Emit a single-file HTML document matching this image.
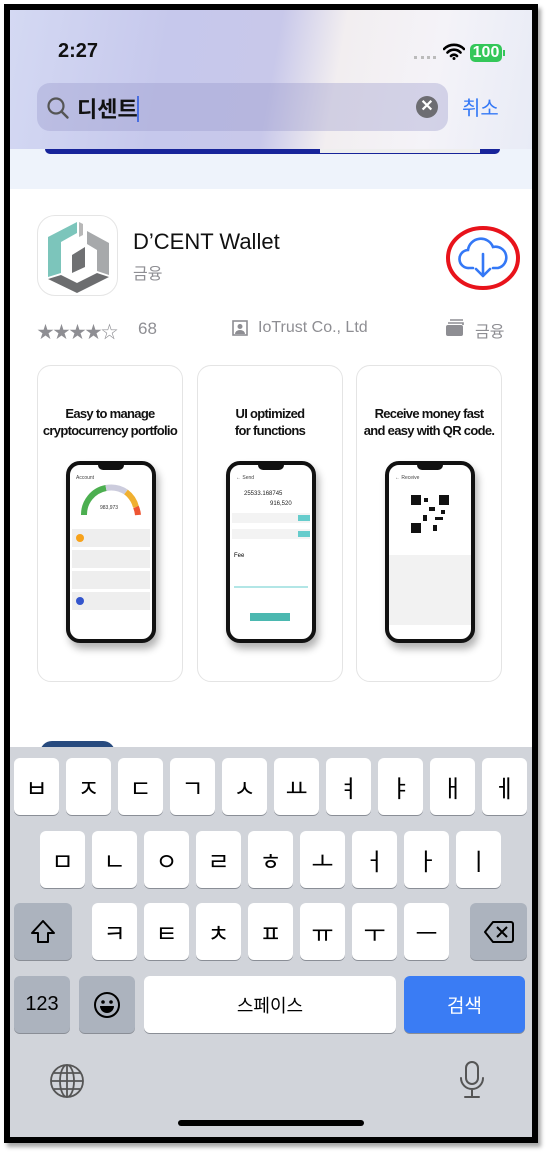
<!DOCTYPE html>
<html><head><meta charset="utf-8"><style>
*{margin:0;padding:0;box-sizing:border-box}
body{width:548px;height:1154px;background:#fff;position:relative;overflow:hidden;font-family:"Liberation Sans","Noto Sans CJK KR",sans-serif}
.frame{position:absolute;left:4px;top:4px;width:534px;height:1139px;background:#000;box-shadow:3px 4px 4px rgba(0,0,0,.35)}
.scr{position:absolute;left:10px;top:10px;width:522px;height:1127px;background:#fff;overflow:hidden}
.hdr{position:absolute;left:0;top:0;width:522px;height:139px;background:linear-gradient(100deg,#d4d9f3 0%,#c6c8ec 30%,#c8c8ea 50%,#f2eef0 62%,#f4f3f8 80%,#e8ebf6 100%)}
.abs{position:absolute}
.key{position:absolute;background:#fff;border-radius:6px;box-shadow:0 1px 0 #8a8e96;height:57px;width:45px;display:flex;align-items:center;justify-content:center;font-size:24px;color:#000}
.dk{background:#acb3be}
.card{position:absolute;top:355px;width:146px;height:317px;border:1px solid #e4e4e4;border-radius:14px;background:#fff}
.card h3{font-size:13px;font-weight:bold;text-align:center;margin-top:39px;line-height:17px;letter-spacing:-.7px;color:#111;white-space:nowrap}
.ph{position:absolute;left:28px;top:95px;width:90px;height:182px;border:4px solid #111;border-radius:14px;background:#fff;box-shadow:3px 6px 8px rgba(0,0,0,.3)}
.ph:before{content:"";position:absolute;left:28px;top:-1px;width:26px;height:6px;background:#111;border-radius:0 0 5px 5px}
</style></head><body>
<div class="frame"></div>
<div class="scr">
 <div class="hdr"></div>
 <div class="abs" style="left:0;top:139px;width:522px;height:40px;background:#eef3fb"></div>
 <div class="abs" style="left:35px;top:139px;width:455px;height:5px;background:#17249a;border-radius:0 0 6px 6px"></div>
 <div class="abs" style="left:310px;top:139px;width:160px;height:4px;background:#eee"></div>
 <div class="abs" style="left:48px;top:30px;font-size:20px;font-weight:bold;color:#111">2:27</div>
 <div class="abs" style="left:404px;top:46px;width:22px;height:3px;border-top:3px dotted #bbb"></div>
 <svg class="abs" style="left:433px;top:33px" width="22" height="17" viewBox="0 0 22 17"><path d="M1 6a14 14 0 0 1 20 0M4.5 9.5a9 9 0 0 1 13 0M8 13a4 4 0 0 1 6 0" stroke="#000" stroke-width="2.6" fill="none" stroke-linecap="round"/><circle cx="11" cy="15.5" r="1.5"/></svg>
 <div class="abs" style="left:460px;top:34px;width:32px;height:18px;background:#34c759;border-radius:5px;color:#fff;font-weight:bold;font-size:16px;line-height:18px;text-align:center">100</div>
 <div class="abs" style="left:493px;top:40px;width:2px;height:6px;background:#34c759"></div>
 <div class="abs" style="left:27px;top:73px;width:411px;height:48px;background:rgba(150,150,200,.35);border-radius:13px"></div>
 <svg class="abs" style="left:36px;top:86px" width="24" height="24" viewBox="0 0 24 24"><circle cx="10" cy="10" r="7.5" stroke="#555" stroke-width="2.2" fill="none"/><path d="M15.5 15.5l6 6" stroke="#555" stroke-width="2.4" stroke-linecap="round"/></svg>
 <div class="abs" style="left:67px;top:82px;font-size:22px;color:#111;font-weight:bold">디센트</div>
 <div class="abs" style="left:127px;top:86px;width:2px;height:26px;background:#4a6ee0"></div>
 <div class="abs" style="left:406px;top:86px;width:22px;height:22px;border-radius:50%;background:#6d6d72;color:#fff;font-size:16px;line-height:22px;text-align:center;font-weight:bold">✕</div>
 <div class="abs" style="left:452px;top:82px;font-size:20px;color:#3478f6">취소</div>

 <div class="abs" style="left:27px;top:205px;width:81px;height:81px;border:1px solid #e5e5e5;border-radius:18px;background:#fff"></div>
 <svg class="abs" style="left:27px;top:205px" width="81" height="81" viewBox="0 0 81 81">
  <polygon points="11,22 40,7 40,18 24,27 24,58 11,62" fill="#7cc5bb"/>
  <polygon points="42,7 46,9 46,20 42,22" fill="#b8b8b8"/>
  <polygon points="50,16 72,28 72,60 60,56 60,35 50,29" fill="#a7a9ab"/>
  <polygon points="35,40 48,32 48,52 35,58" fill="#6f7072"/>
  <polygon points="11,64 24,60 40,68 60,58 72,62 40,78" fill="#6c6d6f"/>
 </svg>
 <div class="abs" style="left:123px;top:219px;font-size:22px;color:#111">D’CENT Wallet</div>
 <div class="abs" style="left:123px;top:250px;font-size:16px;color:#8e8e93">금융</div>
 <svg class="abs" style="left:433px;top:211px" width="80" height="75" viewBox="0 0 80 75"><ellipse cx="40" cy="37" rx="35" ry="30" stroke="#e8131b" stroke-width="4" fill="none"/>
  <path d="M30 47h-4a9 9 0 0 1-1-18a13 13 0 0 1 25-3a9 9 0 0 1 5 21h-5" stroke="#3478f6" stroke-width="2.6" fill="none" stroke-linecap="round"/><path d="M40 33v22M33 48l7 7 7-7" stroke="#3478f6" stroke-width="2.6" fill="none" stroke-linecap="round" stroke-linejoin="round"/></svg>
 <div class="abs" style="left:27px;top:308px;font-size:17px;color:#8e8e93;letter-spacing:-1px">★★★★☆</div>
 <div class="abs" style="left:128px;top:309px;font-size:17px;color:#8e8e93">68</div>
 <svg class="abs" style="left:222px;top:310px" width="16" height="16" viewBox="0 0 16 16"><rect x="1" y="1" width="14" height="14" stroke="#8e8e93" stroke-width="1.6" fill="none"/><circle cx="8" cy="6.5" r="2.5" fill="#8e8e93"/><path d="M3 14a5 4 0 0 1 10 0z" fill="#8e8e93"/></svg>
 <div class="abs" style="left:248px;top:309px;font-size:16px;color:#8e8e93">IoTrust Co., Ltd</div>
 <svg class="abs" style="left:435px;top:309px" width="22" height="18" viewBox="0 0 22 18"><rect x="1" y="6" width="17" height="11" rx="2" fill="#8e8e93"/><path d="M3 4h15v2M5 1h13" stroke="#8e8e93" stroke-width="1.6" fill="none"/></svg>
 <div class="abs" style="left:465px;top:308px;font-size:16px;color:#8e8e93">금융</div>

 <div class="card" style="left:27px"><h3>Easy to manage<br>cryptocurrency portfolio</h3>
  <div class="ph"><svg width="82" height="174" viewBox="0 0 82 174"><text x="6" y="14" font-size="5" fill="#444">Account</text><path d="M14 50a27 27 0 0 1 22-27" stroke="#4caf50" stroke-width="6" fill="none"/><path d="M36 23a27 27 0 0 1 20 4" stroke="#ccd" stroke-width="6" fill="none"/><path d="M56 27a27 27 0 0 1 10 15" stroke="#f0b030" stroke-width="6" fill="none"/><path d="M66 42a27 27 0 0 1 2 8" stroke="#e53" stroke-width="6" fill="none"/><text x="30" y="44" font-size="5" fill="#333">983,973</text><g fill="#eee"><rect x="2" y="64" width="78" height="18"/><rect x="2" y="85" width="78" height="18"/><rect x="2" y="106" width="78" height="18"/><rect x="2" y="127" width="78" height="18"/></g><circle cx="10" cy="73" r="4" fill="#f7a21b"/><circle cx="10" cy="136" r="4" fill="#3355cc"/></svg></div></div>
 <div class="card" style="left:187px"><h3>UI optimized<br>for functions</h3>
  <div class="ph"><svg width="82" height="174" viewBox="0 0 82 174"><text x="6" y="14" font-size="5" fill="#444">← Send</text><text x="14" y="30" font-size="6" fill="#222">25533.168745</text><text x="40" y="40" font-size="6" fill="#222">916,520</text><rect x="2" y="48" width="78" height="10" fill="#f3f3f3"/><rect x="68" y="50" width="12" height="6" fill="#6cc"/><rect x="2" y="64" width="78" height="10" fill="#f3f3f3"/><rect x="68" y="66" width="12" height="6" fill="#6cc"/><text x="4" y="92" font-size="6">Fee</text><path d="M4 122h74" stroke="#6cc"/><rect x="20" y="148" width="40" height="8" fill="#4bb8b0"/></svg></div></div>
 <div class="card" style="left:346px"><h3>Receive money fast<br>and easy with QR code.</h3>
  <div class="ph"><svg width="82" height="174" viewBox="0 0 82 174"><text x="6" y="14" font-size="5" fill="#444">← Receive</text><rect x="22" y="30" width="38" height="38" fill="#fff"/><g fill="#111"><rect x="22" y="30" width="10" height="10"/><rect x="50" y="30" width="10" height="10"/><rect x="22" y="58" width="10" height="10"/><rect x="35" y="33" width="4" height="4"/><rect x="40" y="42" width="6" height="4"/><rect x="34" y="50" width="4" height="6"/><rect x="46" y="52" width="8" height="3"/><rect x="44" y="60" width="4" height="6"/><rect x="52" y="45" width="4" height="4"/></g><rect x="0" y="90" width="82" height="70" fill="#f2f2f2"/></svg></div></div>

 <div class="abs" style="left:30px;top:731px;width:75px;height:12px;background:#274a7e;border-radius:14px 14px 0 0"></div>

 <div class="abs" style="left:0;top:737px;width:522px;height:390px;background:#d1d4da"></div>
 <div class="key" style="left:4px;top:748px">ㅂ</div>
 <div class="key" style="left:56px;top:748px">ㅈ</div>
 <div class="key" style="left:108px;top:748px">ㄷ</div>
 <div class="key" style="left:160px;top:748px">ㄱ</div>
 <div class="key" style="left:212px;top:748px">ㅅ</div>
 <div class="key" style="left:264px;top:748px">ㅛ</div>
 <div class="key" style="left:316px;top:748px">ㅕ</div>
 <div class="key" style="left:368px;top:748px">ㅑ</div>
 <div class="key" style="left:420px;top:748px">ㅐ</div>
 <div class="key" style="left:472px;top:748px">ㅔ</div>
 <div class="key" style="left:30px;top:821px">ㅁ</div>
 <div class="key" style="left:82px;top:821px">ㄴ</div>
 <div class="key" style="left:134px;top:821px">ㅇ</div>
 <div class="key" style="left:186px;top:821px">ㄹ</div>
 <div class="key" style="left:238px;top:821px">ㅎ</div>
 <div class="key" style="left:290px;top:821px">ㅗ</div>
 <div class="key" style="left:342px;top:821px">ㅓ</div>
 <div class="key" style="left:394px;top:821px">ㅏ</div>
 <div class="key" style="left:446px;top:821px">ㅣ</div>
 <div class="key dk" style="left:4px;top:893px;width:58px"><svg width="28" height="28" viewBox="0 0 28 28"><path d="M14 3L3 15h6v9h10v-9h6z" stroke="#000" stroke-width="2" fill="none" stroke-linejoin="round"/></svg></div>
 <div class="key" style="left:82px;top:893px">ㅋ</div>
 <div class="key" style="left:134px;top:893px">ㅌ</div>
 <div class="key" style="left:186px;top:893px">ㅊ</div>
 <div class="key" style="left:238px;top:893px">ㅍ</div>
 <div class="key" style="left:290px;top:893px">ㅠ</div>
 <div class="key" style="left:342px;top:893px">ㅜ</div>
 <div class="key" style="left:394px;top:893px">ㅡ</div>
 <div class="key dk" style="left:460px;top:893px;width:57px"><svg width="30" height="24" viewBox="0 0 30 24"><path d="M9 2h18a2 2 0 0 1 2 2v16a2 2 0 0 1-2 2H9L1 12z" stroke="#000" stroke-width="2" fill="none" stroke-linejoin="round"/><path d="M13 7l10 10M23 7L13 17" stroke="#000" stroke-width="2"/></svg></div>
 <div class="key dk" style="left:4px;top:966px;width:56px;font-size:20px">123</div>
 <div class="key dk" style="left:69px;top:966px;width:56px"><svg width="28" height="28" viewBox="0 0 28 28"><circle cx="14" cy="14" r="12" stroke="#000" stroke-width="2" fill="none"/><circle cx="10" cy="11" r="1.8"/><circle cx="18" cy="11" r="1.8"/><path d="M7 15h14a7 7 0 0 1-14 0z"/></svg></div>
 <div class="key" style="left:134px;top:966px;width:252px;font-size:18px">스페이스</div>
 <div class="key" style="left:394px;top:966px;width:121px;background:#3a7cf4;color:#fff;font-size:19px">검색</div>
 <svg class="abs" style="left:39px;top:1053px" width="36" height="36" viewBox="0 0 36 36"><g stroke="#555" stroke-width="1.8" fill="none"><circle cx="18" cy="18" r="16"/><ellipse cx="18" cy="18" rx="7" ry="16"/><path d="M18 2v32M2 18h32M5 10h26M5 26h26"/></g></svg>
 <svg class="abs" style="left:448px;top:1050px" width="28" height="40" viewBox="0 0 28 40"><g stroke="#555" stroke-width="2" fill="none" stroke-linecap="round"><rect x="8" y="2" width="12" height="22" rx="6"/><path d="M3 18a11 11 0 0 0 22 0M14 29v8M7 37h14"/></g></svg>
 <div class="abs" style="left:168px;top:1110px;width:186px;height:6px;background:#000;border-radius:3px"></div>
</div>
</body></html>
